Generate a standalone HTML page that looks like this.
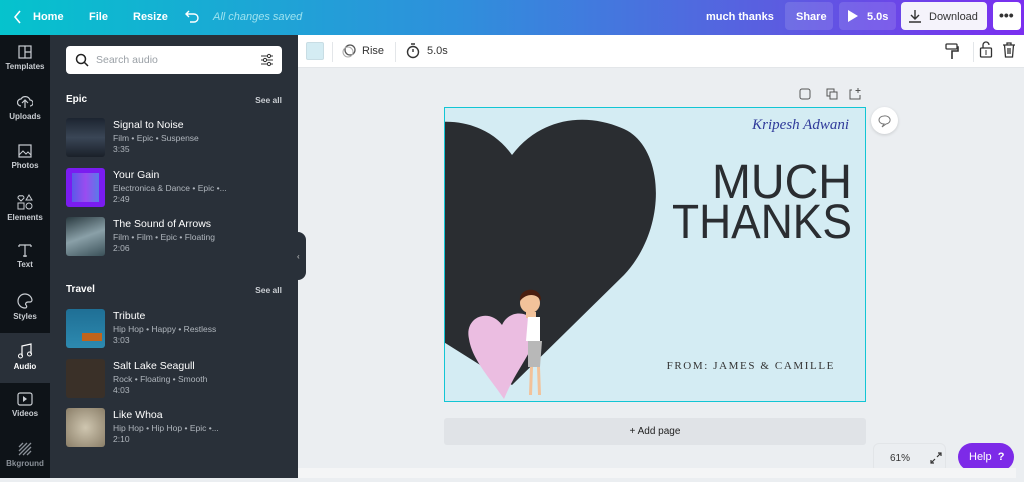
<!DOCTYPE html>
<html><head><meta charset="utf-8"><style>
*{margin:0;padding:0;box-sizing:border-box}
body{width:1024px;height:478px;overflow:hidden;font-family:"Liberation Sans",sans-serif;background:#ebeef1;position:relative}
.top{position:absolute;left:0;top:0;width:1024px;height:35px;background:linear-gradient(90deg,#05c3cd 0%,#2f8fdc 45%,#5a5ee0 75%,#7b2ff0 100%);color:#fff;font-size:11px;font-weight:bold}
.top span{position:absolute;top:11px}
.rail{position:absolute;left:0;top:35px;width:50px;height:443px;background:#0e1318}
.ri{position:absolute;left:0;width:50px;height:50px;color:#c9cdd2;font-size:8px;font-weight:bold;text-align:center}
.ri svg{display:block;margin:10px auto 3px}
.panel{position:absolute;left:50px;top:35px;width:248px;height:443px;background:#293039;color:#fff}
.search{position:absolute;left:16px;top:11px;width:216px;height:28px;background:#fff;border-radius:4px}
.hd{position:absolute;left:16px;font-size:10px;font-weight:bold}
.sa{position:absolute;right:16px;font-size:8.5px;color:#c9cdd2;font-weight:bold}
.it{position:absolute;left:16px;height:40px}
.th{position:absolute;left:0;top:0;width:39px;height:39px;border-radius:3px}
.t1{position:absolute;left:47px;top:1px;font-size:10.5px;white-space:nowrap}
.t2{position:absolute;left:47px;top:15px;font-size:8.5px;color:#b0b6bd;white-space:nowrap;line-height:11px}
.tb{position:absolute;left:298px;top:35px;width:726px;height:33px;background:#fff;border-bottom:1px solid #e3e6e9;font-size:11px;color:#333}
</style></head><body>
<div class="top">
<svg style="position:absolute;left:14px;top:10px" width="8" height="14"><path d="M6 1L1 7l5 6" stroke="#fff" stroke-width="1.6" fill="none"/></svg>
<span style="left:33px">Home</span><span style="left:89px">File</span><span style="left:133px">Resize</span>
<svg style="position:absolute;left:185px;top:9px" width="16" height="14"><path d="M4 2L1 5l3 3M1 5h8a4 4 0 010 8H5" stroke="#fff" stroke-width="1.4" fill="none"/></svg>
<span style="left:213px;font-weight:normal;font-style:italic;color:#9ee3f0">All changes saved</span>
<span style="left:706px">much thanks</span>
<div style="position:absolute;left:785px;top:2px;width:48px;height:28px;background:rgba(255,255,255,.12);border-radius:4px"></div><span style="left:796px">Share</span>
<div style="position:absolute;left:839px;top:2px;width:57px;height:28px;background:rgba(255,255,255,.12);border-radius:4px"></div>
<svg style="position:absolute;left:848px;top:10px" width="10" height="12"><path d="M0 0L10 6L0 12Z" fill="#fff"/></svg><span style="left:867px">5.0s</span>
<div style="position:absolute;left:901px;top:2px;width:86px;height:28px;background:#f5f3fb;border-radius:4px"></div>
<svg style="position:absolute;left:908px;top:9px" width="14" height="14"><path d="M7 1v9M3 6l4 4 4-4M1 13h12" stroke="#333" stroke-width="1.4" fill="none"/></svg>
<span style="left:929px;color:#333;font-weight:normal">Download</span>
<div style="position:absolute;left:993px;top:2px;width:28px;height:28px;background:#fff;border-radius:4px"></div>
<span style="left:999px;color:#333;top:7px;font-size:14px">•••</span>
</div>

<div class="rail">
<div class="ri" style="top:0"><svg width="14" height="14"><rect x="1" y="1" width="12" height="12" fill="none" stroke="#c9cdd2" stroke-width="1.2"/><path d="M7 1v12M7 7h6" stroke="#c9cdd2" stroke-width="1.2"/></svg>Templates</div>
<div class="ri" style="top:50px"><svg width="16" height="14"><path d="M4 11a3.5 3.5 0 010-7 5 5 0 019 1 3 3 0 010 6M8 13V6M5 8l3-3 3 3" stroke="#c9cdd2" stroke-width="1.2" fill="none"/></svg>Uploads</div>
<div class="ri" style="top:99px"><svg width="14" height="14"><rect x="1" y="1" width="12" height="12" fill="none" stroke="#c9cdd2" stroke-width="1.2"/><path d="M1 11l4-4 3 3 2-2 3 3" stroke="#c9cdd2" fill="none"/></svg>Photos</div>
<div class="ri" style="top:149px"><svg width="16" height="16"><path d="M4 7L1 4a2 2 0 013-2 2 2 0 013 2z" stroke="#c9cdd2" fill="none"/><path d="M12 1l3 5H9z" stroke="#c9cdd2" fill="none"/><rect x="1" y="9" width="6" height="6" stroke="#c9cdd2" fill="none"/><circle cx="12" cy="12" r="3" stroke="#c9cdd2" fill="none"/></svg>Elements</div>
<div class="ri" style="top:198px"><svg width="14" height="14"><path d="M1 2h12M7 2v12M1 2v2M13 2v2M5 13h4" stroke="#c9cdd2" stroke-width="1.2" fill="none"/></svg>Text</div>
<div class="ri" style="top:248px"><svg width="16" height="16"><path d="M8 1a7 7 0 000 14c2 0 2-2 1-3s0-3 2-3h2a2 2 0 002-2A7 7 0 008 1z" stroke="#c9cdd2" stroke-width="1.2" fill="none"/></svg>Styles</div>
<div class="ri" style="top:298px;background:#293039;color:#fff"><svg width="14" height="16"><path d="M4 13V3l9-2v10" stroke="#fff" stroke-width="1.2" fill="none"/><circle cx="2.5" cy="13" r="2" stroke="#fff" fill="none"/><circle cx="11.5" cy="11" r="2" stroke="#fff" fill="none"/></svg>Audio</div>
<div class="ri" style="top:347px"><svg width="16" height="14"><rect x="1" y="1" width="14" height="12" rx="2" stroke="#c9cdd2" stroke-width="1.2" fill="none"/><path d="M6 4l4 3-4 3z" fill="#c9cdd2"/></svg>Videos</div>
<div class="ri" style="top:397px;color:#8a9098"><svg width="14" height="14"><path d="M1 5L5 1M1 9L9 1M1 13L13 1M5 13L13 5M9 13l4-4" stroke="#8a9098" stroke-width="1.3"/></svg>Bkground</div>
</div>

<div class="panel">
<div class="search">
<svg style="position:absolute;left:9px;top:7px" width="14" height="14"><circle cx="6" cy="6" r="4.5" stroke="#222" stroke-width="1.5" fill="none"/><path d="M9.5 9.5L13 13" stroke="#222" stroke-width="1.5"/></svg>
<span style="position:absolute;left:30px;top:8px;font-size:10.5px;color:#9aa0a6">Search audio</span>
<svg style="position:absolute;left:194px;top:7px" width="14" height="14"><path d="M1 3h12M1 7h12M1 11h12" stroke="#333"/><circle cx="9" cy="3" r="1.6" fill="#fff" stroke="#333"/><circle cx="5" cy="7" r="1.6" fill="#fff" stroke="#333"/><circle cx="9" cy="11" r="1.6" fill="#fff" stroke="#333"/></svg>
</div>
<div class="hd" style="top:59px">Epic</div><div class="sa" style="top:60px">See all</div>
<div class="it" style="top:83px"><div class="th" style="background:linear-gradient(#1c2430,#3a4656 50%,#1a2029)"></div><div class="t1">Signal to Noise</div><div class="t2">Film • Epic • Suspense<br>3:35</div></div>
<div class="it" style="top:133px"><div class="th" style="background:#7a1cf0"><div style="margin:5px 6px;width:27px;height:29px;background:linear-gradient(90deg,#5a5ae8,#9a4cf0,#5a7ae8)"></div></div><div class="t1">Your Gain</div><div class="t2">Electronica &amp; Dance • Epic •...<br>2:49</div></div>
<div class="it" style="top:182px"><div class="th" style="background:linear-gradient(160deg,#2a3a40,#8aa0a8 50%,#3a5058)"></div><div class="t1">The Sound of Arrows</div><div class="t2">Film • Film • Epic • Floating<br>2:06</div></div>
<div class="hd" style="top:249px">Travel</div><div class="sa" style="top:250px">See all</div>
<div class="it" style="top:274px"><div class="th" style="background:linear-gradient(#1f6f95,#2d8ab0)"><div style="position:absolute;left:16px;top:24px;width:20px;height:8px;background:#c0641c"></div></div><div class="t1">Tribute</div><div class="t2">Hip Hop • Happy • Restless<br>3:03</div></div>
<div class="it" style="top:324px"><div class="th" style="background:#3a3028"></div><div class="t1">Salt Lake Seagull</div><div class="t2">Rock • Floating • Smooth<br>4:03</div></div>
<div class="it" style="top:373px"><div class="th" style="background:radial-gradient(#cfc6b0,#8a7e68)"></div><div class="t1">Like Whoa</div><div class="t2">Hip Hop • Hip Hop • Epic •...<br>2:10</div></div>
</div>
<div style="position:absolute;left:296px;top:232px;width:10px;height:48px;background:#293039;border-radius:0 8px 8px 0"></div>
<span style="position:absolute;left:297px;top:252px;color:#ccc;font-size:8px">‹</span>

<div class="tb">
<div style="position:absolute;left:8px;top:7px;width:18px;height:18px;background:#d4ecf3;border:1px solid #c8dde4;border-radius:2px"></div>
<div style="position:absolute;left:34px;top:7px;width:1px;height:20px;background:#e3e6e9"></div>
<svg style="position:absolute;left:43px;top:8px" width="16" height="16"><circle cx="9" cy="7" r="5" stroke="#555" stroke-width="1.3" fill="none"/><circle cx="7" cy="9" r="5" stroke="#aaa" fill="none"/></svg>
<span style="position:absolute;left:64px;top:10px">Rise</span>
<div style="position:absolute;left:97px;top:7px;width:1px;height:20px;background:#e3e6e9"></div>
<svg style="position:absolute;left:107px;top:7px" width="16" height="17"><circle cx="8" cy="10" r="5.5" stroke="#333" stroke-width="1.4" fill="none"/><path d="M6 2h4M8 10V7" stroke="#333" stroke-width="1.4"/></svg>
<span style="position:absolute;left:129px;top:10px">5.0s</span>
<svg style="position:absolute;left:647px;top:8px" width="14" height="18"><rect x="1" y="1" width="11" height="5" rx="1" stroke="#333" stroke-width="1.3" fill="none"/><path d="M12 4h1v4H7v8" stroke="#333" stroke-width="1.6" fill="none"/></svg>
<div style="position:absolute;left:675px;top:7px;width:1px;height:20px;background:#e3e6e9"></div>
<svg style="position:absolute;left:681px;top:6px" width="14" height="18"><path d="M4 7V4a3 3 0 016 0" stroke="#333" stroke-width="1.3" fill="none"/><rect x="1.5" y="7" width="11" height="9" rx="1" stroke="#333" stroke-width="1.3" fill="none"/><path d="M7 9v5" stroke="#333"/></svg>
<svg style="position:absolute;left:704px;top:6px" width="14" height="18"><path d="M1 4h12M5 4V2h4v2M2.5 4l1 12h7l1-12M6 7v6M8 7v6" stroke="#333" stroke-width="1.3" fill="none"/></svg>
</div>

<svg style="position:absolute;left:798px;top:88px" width="70" height="14"><rect x="2" y="1" width="10" height="10" rx="2" stroke="#555" fill="none"/><rect x="29" y="1" width="7" height="7" stroke="#555" fill="none"/><rect x="32" y="4" width="7" height="7" stroke="#555" fill="#ebeef1"/><path d="M54 2h-2v9h10V7M60 0v5M57.5 2.5h5" stroke="#555" fill="none"/></svg>
<div style="position:absolute;left:871px;top:107px;width:27px;height:27px;border-radius:50%;background:#fff;box-shadow:0 1px 3px rgba(0,0,0,.15)"></div>
<svg style="position:absolute;left:877px;top:113px" width="16" height="15"><path d="M7 3a5 4 0 100 8l-2 3 4-3a5 4 0 00-2-8" stroke="#777" fill="none"/></svg>

<div style="position:absolute;left:444px;top:107px;width:422px;height:295px;border:1.5px solid #12c5d4;background:#d4ecf3;overflow:hidden">
<svg style="position:absolute;left:-1px;top:-1px" width="422" height="295">
<path d="M68 48 C45 15 0 5 -40 25 L-40 210 L68 278 L180 168 C225 120 220 40 180 22 C140 4 95 12 68 48Z" fill="#2a2d31"/>
<path d="M25 232 C20 210 45 200 58 218 C66 200 92 204 92 224 C92 242 72 262 60 292 C45 270 28 252 25 232Z" fill="#ebbde1"/>
<circle cx="86" cy="196" r="10" fill="#f2c29a"/>
<path d="M76 194 C74 180 98 178 97 194 C93 186 82 186 76 194Z" fill="#4a1e10"/>
<rect x="82" y="205" width="10" height="6" fill="#f2c29a"/>
<path d="M84 210 h12 v24 h-14z" fill="#fff"/>
<path d="M84 234 h14 l-2 26 h-12z" fill="#b8b8b8"/>
<path d="M86 260 l-1 28 h3 l1-28zM93 260 l1 28 h3 l-1-28z" fill="#f2c29a"/>
<text x="405" y="22" text-anchor="end" font-family="Liberation Serif,serif" font-style="italic" font-size="15" fill="#2f3a9a">Kripesh Adwani</text>
<text x="408" y="91" text-anchor="end" font-family="Liberation Sans,sans-serif" font-size="48" fill="#2a2d31" textLength="140" lengthAdjust="spacingAndGlyphs">MUCH</text>
<text x="408" y="131" text-anchor="end" font-family="Liberation Sans,sans-serif" font-size="48" fill="#2a2d31" textLength="180" lengthAdjust="spacingAndGlyphs">THANKS</text>
<text x="391" y="262" text-anchor="end" font-family="Liberation Serif,serif" font-size="11" letter-spacing="1.6" fill="#333">FROM: JAMES &amp; CAMILLE</text>
</svg>
</div>

<div style="position:absolute;left:444px;top:418px;width:422px;height:27px;background:#e0e3e7;border-radius:3px;text-align:center;font-size:10px;line-height:27px;color:#222">+ Add page</div>
<div style="position:absolute;left:873px;top:443px;width:73px;height:30px;background:#ebeef1;border:1px solid #e2e5e8;border-radius:6px;font-size:10px;color:#333"><span style="position:absolute;left:16px;top:9px">61%</span>
<svg style="position:absolute;left:56px;top:8px" width="12" height="12"><path d="M7 5l4-4M8 1h3v3M5 7l-4 4M1 8v3h3" stroke="#333" stroke-width="1.2" fill="none"/></svg></div>
<div style="position:absolute;left:958px;top:443px;width:56px;height:28px;background:#7d2ae8;border-radius:14px;color:#fff;font-size:11px;line-height:28px;padding-left:11px">Help&nbsp; <b>?</b></div>
<div style="position:absolute;left:298px;top:468px;width:718px;height:10px;background:#f4f5f6"></div>
<div style="position:absolute;left:1016px;top:68px;width:8px;height:410px;background:#ebeef1"></div>
</body></html>
